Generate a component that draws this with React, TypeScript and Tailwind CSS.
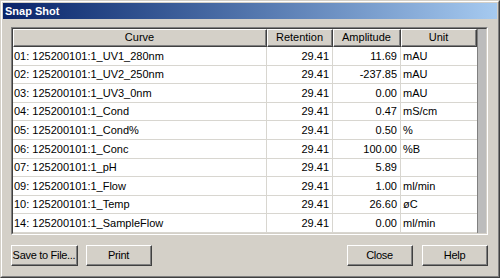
import React from 'react';

type Row = { curve: string; retention: string; amplitude: string; unit: string };

const rows: Row[] = [
  { curve: '01: 125200101:1_UV1_280nm', retention: '29.41', amplitude: '11.69', unit: 'mAU' },
  { curve: '02: 125200101:1_UV2_250nm', retention: '29.41', amplitude: '-237.85', unit: 'mAU' },
  { curve: '03: 125200101:1_UV3_0nm', retention: '29.41', amplitude: '0.00', unit: 'mAU' },
  { curve: '04: 125200101:1_Cond', retention: '29.41', amplitude: '0.47', unit: 'mS/cm' },
  { curve: '05: 125200101:1_Cond%', retention: '29.41', amplitude: '0.50', unit: '%' },
  { curve: '06: 125200101:1_Conc', retention: '29.41', amplitude: '100.00', unit: '%B' },
  { curve: '07: 125200101:1_pH', retention: '29.41', amplitude: '5.89', unit: '' },
  { curve: '09: 125200101:1_Flow', retention: '29.41', amplitude: '1.00', unit: 'ml/min' },
  { curve: '10: 125200101:1_Temp', retention: '29.41', amplitude: '26.60', unit: 'øC' },
  { curve: '14: 125200101:1_SampleFlow', retention: '29.41', amplitude: '0.00', unit: 'ml/min' },
];

const font = "font-['Liberation_Sans',Arial,sans-serif]";

function HeaderCell({ label }: { label: string }) {
  return (
    <div className="border-t border-l border-t-white border-l-white border-r border-b border-r-[#404040] border-b-[#404040]">
      <div className="h-[16px] flex items-center justify-center border-r border-b border-r-[#808080] border-b-[#808080] text-[11px] text-black">
        {label}
      </div>
    </div>
  );
}

function Button({ label, wide }: { label: string; wide?: boolean }) {
  return (
    <div
      className={`${wide ? 'w-[67px]' : 'w-[66px]'} h-[21px] border border-t-white border-l-white border-r-[#404040] border-b-[#404040] bg-[#d4d0c8]`}
    >
      <div className="h-full flex items-center justify-center border-r border-b border-r-[#808080] border-b-[#808080] text-[11px] text-black whitespace-nowrap tracking-[-0.3px]">
        {label}
      </div>
    </div>
  );
}

export default function App() {
  return (
    <div className={`w-[500px] h-[278px] ${font} border border-t-[#d4d0c8] border-l-[#d4d0c8] border-r-[#404040] border-b-[#404040] bg-[#d4d0c8]`}>
      <div className="h-full border border-t-white border-l-white border-r-[#808080] border-b-[#808080] p-px flex flex-col">
        <div className="h-[16px] bg-linear-to-r from-[#0a246a] to-[#a6caf0] flex items-center pl-[2px]">
          <span className="text-[11px] font-bold text-white">Snap Shot</span>
        </div>

        <div className="flex-1 pt-[8px] px-[8px] pb-[9px] flex flex-col">
          {/* sunken list frame */}
          <div className="w-[477px] border border-t-[#808080] border-l-[#808080] border-r-white border-b-white">
            <div className="border border-t-[#404040] border-l-[#404040] border-r-[#d4d0c8] border-b-[#d4d0c8] flex bg-white">
              <div className="flex-1">
                <div className="grid grid-cols-[254px_66px_68px_76px] bg-[#d4d0c8]">
                  <HeaderCell label="Curve" />
                  <HeaderCell label="Retention" />
                  <HeaderCell label="Amplitude" />
                  <HeaderCell label="Unit" />
                </div>
                {rows.map((r) => (
                  <div key={r.curve} className="grid grid-cols-[254px_66px_68px_76px] h-[18.6px] text-[11px] text-black">
                    <div className="border-r border-b border-[#d8d6d0] pl-[1px] flex items-center whitespace-nowrap">{r.curve}</div>
                    <div className="border-r border-b border-[#d8d6d0] pr-[3px] flex items-center justify-end">{r.retention}</div>
                    <div className="border-r border-b border-[#d8d6d0] pr-[3px] flex items-center justify-end">{r.amplitude}</div>
                    <div className="border-b border-[#d8d6d0] pl-[2px] flex items-center">{r.unit}</div>
                  </div>
                ))}
              </div>
              <div className="w-[9px] bg-[#bcbcbc] border-l border-l-[#808080]" />
            </div>
          </div>

          <div className="mt-auto flex items-center w-[477px]">
            <Button label="Save to File..." wide />
            <div className="ml-[8px]">
              <Button label="Print" />
            </div>
            <div className="ml-auto">
              <Button label="Close" />
            </div>
            <div className="ml-[9px]">
              <Button label="Help" />
            </div>
          </div>
        </div>
      </div>
    </div>
  );
}
